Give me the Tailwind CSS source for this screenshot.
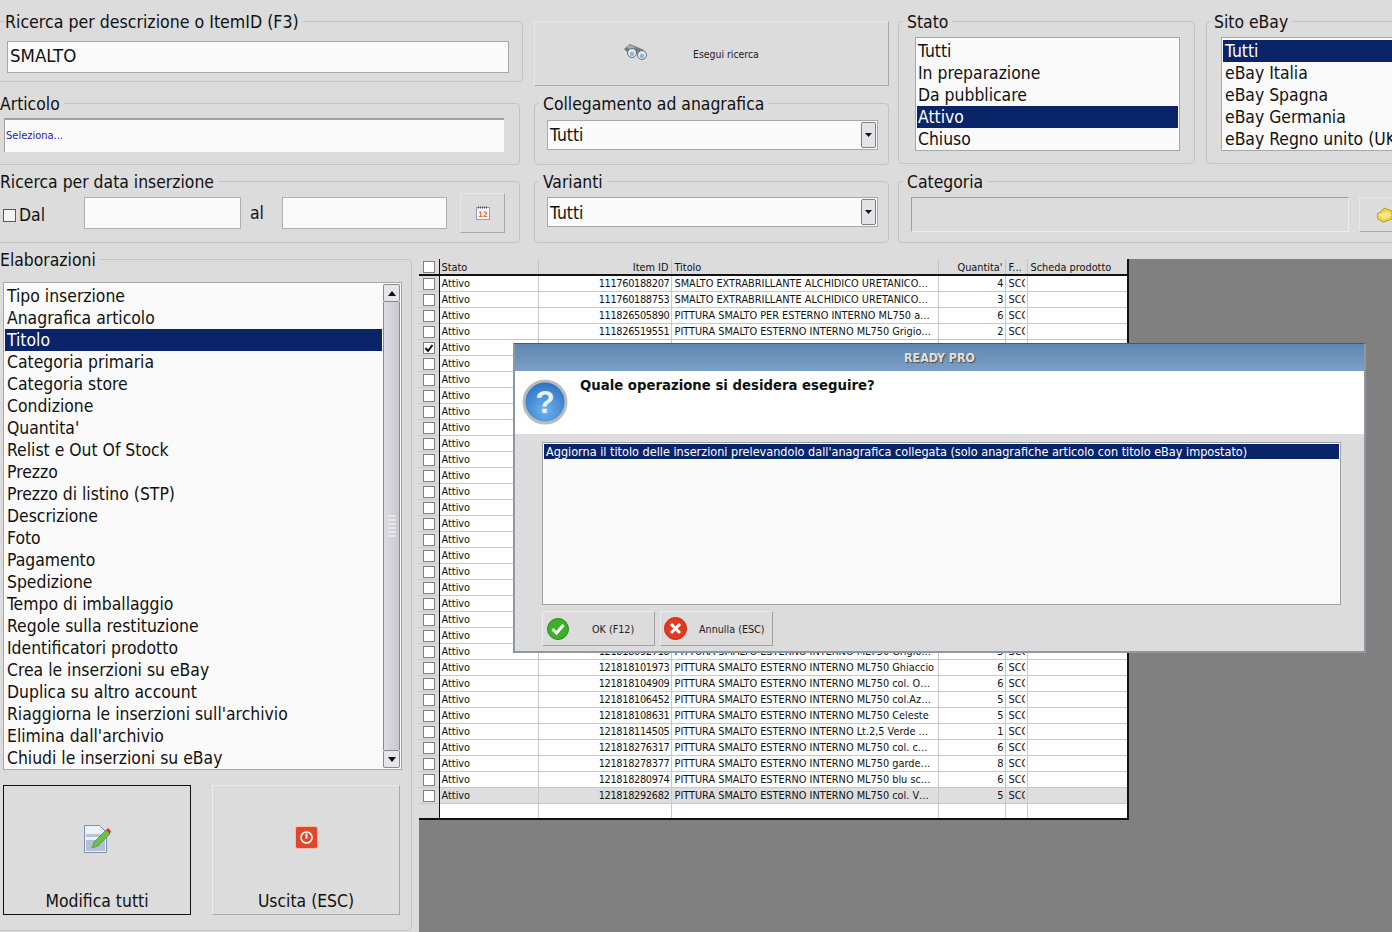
<!DOCTYPE html>
<html>
<head>
    <title>Ready Pro - Inserzioni eBay</title>
    <script src="https://cdn.jsdelivr.net/npm/@tailwindcss/browser@4"></script>
</head>
<body class="bg-[#dcdcdc] text-[#111] [font-family:'DejaVu_Sans_Condensed','DejaVu_Sans',sans-serif]">
<div class="relative w-[1392px] h-[932px] overflow-hidden">

    <!-- filtri -->
    <div class="grid grid-cols-[534px_364px_308px_1fr] grid-rows-[82px_78px_78px] pt-[10px] h-[248px]">

        <fieldset class="min-w-0 -ml-[7px] w-[530px] h-[72px] border border-[#c4c4c4] rounded-[4px]">
            <legend class="ml-[11px] pr-1 text-[17.6px] leading-[22px] translate-y-[1px]">Ricerca per descrizione o ItemID (F3)</legend>
            <input type="text" value="SMALTO" class="block mt-[9px] ml-[13px] w-[502px] h-[32px] pl-[2px] pb-[3px] bg-[#fafafa] border border-[#a8a8a8] text-[18.5px]">
        </fieldset>

        <button class="mt-[11px] w-[355px] h-[65px] flex items-center bg-[#dcdcdc] border border-t-[#e8e8e8] border-l-[#e8e8e8] border-r-[#a8a8a8] border-b-[#a8a8a8] text-[10.4px] text-[#222]">
            <svg class="ml-[88px] mb-[3px] w-[25px] h-[18px]" viewBox="0 0 25 18">
                <path d="M1 6l6-5 7 3 7 3-3 5-8-3-5 1z" fill="#6f7884"/>
                <path d="M3 4l5-2 5 3-5 2z" fill="#a4acb6"/>
                <circle cx="9" cy="10" r="4.5" fill="#dfe8f2" stroke="#66707c"/>
                <circle cx="19" cy="12" r="4.5" fill="#dfe8f2" stroke="#66707c"/>
                <circle cx="9" cy="11" r="2.2" fill="#8fb2d8"/>
                <circle cx="19" cy="13" r="2.2" fill="#8fb2d8"/>
            </svg>
            <span class="ml-[45px] mt-[2px]">Esegui ricerca</span>
        </button>

        <fieldset class="row-span-2 min-w-0 w-[297px] h-[154px] border border-[#c4c4c4] rounded-[4px]">
            <legend class="ml-[4px] px-1 text-[17.4px] leading-[22px] translate-y-[1px]">Stato</legend>
            <ul class="mt-[5px] ml-[16px] w-[265px] h-[114px] py-[2px] px-[1px] bg-[#fafafa] border border-[#a8a8a8] text-[17.4px] leading-[22px]">
                <li class="pl-[1px]">Tutti</li>
                <li class="pl-[1px]">In preparazione</li>
                <li class="pl-[1px]">Da pubblicare</li>
                <li class="pl-[1px] bg-[#0a246a] text-white">Attivo</li>
                <li class="pl-[1px]">Chiuso</li>
            </ul>
        </fieldset>

        <fieldset class="row-span-2 min-w-0 w-[200px] h-[154px] border border-r-0 border-[#c4c4c4] rounded-l-[4px]">
            <legend class="ml-[3px] px-1 text-[17.4px] leading-[22px] translate-y-[1px]">Sito eBay</legend>
            <ul class="mt-[5px] ml-[14px] h-[114px] py-[2px] pl-[1px] bg-[#fafafa] border border-r-0 border-[#a8a8a8] text-[17.4px] leading-[22px] whitespace-nowrap overflow-hidden">
                <li class="px-[2px] bg-[#0a246a] text-white">Tutti</li>
                <li class="px-[2px]">eBay Italia</li>
                <li class="px-[2px]">eBay Spagna</li>
                <li class="px-[2px]">eBay Germania</li>
                <li class="px-[2px]">eBay Regno unito (UK)</li>
            </ul>
        </fieldset>

        <fieldset class="min-w-0 -ml-[7px] w-[527px] h-[73px] border border-[#c4c4c4] rounded-[4px]">
            <legend class="ml-[6px] pr-1 text-[17.4px] leading-[22px] translate-y-[1px]">Articolo</legend>
            <div class="mt-[4px] ml-[10px] w-[500px] h-[34px] pl-[1px] flex items-center bg-[#fafafa] border-t-2 border-l border-[#a0a0a0] text-[11px] text-[#1a1ab0]">Seleziona...</div>
        </fieldset>

        <fieldset class="min-w-0 w-[355px] h-[73px] border border-[#c4c4c4] rounded-[4px]">
            <legend class="ml-[4px] px-1 text-[17.4px] leading-[22px] translate-y-[1px]">Collegamento ad anagrafica</legend>
            <div class="mt-[6px] ml-[12px] w-[331px] h-[30px] flex items-center justify-between bg-[#fafafa] border border-[#a8a8a8] pl-[2px] pr-[1px] text-[17.4px]">
                <span class="mt-[1px]">Tutti</span>
                <span class="w-[15px] h-[26px] flex items-center justify-center bg-[#e4e4e8] border border-[#808080] rounded-[2px]">
                    <svg class="w-[7px] h-[4px]" viewBox="0 0 7 4"><path d="M0 0h7L3.5 4z" fill="#111"/></svg>
                </span>
            </div>
        </fieldset>

        <fieldset class="min-w-0 -ml-[7px] w-[527px] h-[73px] border border-[#c4c4c4] rounded-[4px]">
            <legend class="ml-[6px] pr-1 text-[17.4px] leading-[22px] translate-y-[1px]">Ricerca per data inserzione</legend>
            <div class="flex items-center mt-[1px] ml-[10px] h-[40px]">
                <span class="w-[13px] h-[13px] -ml-[1px] mt-[4px] bg-[#f4f4f4] border border-[#4a5a70]"></span>
                <span class="ml-[3px] mt-[4px] w-[29px] text-[17.4px]">Dal</span>
                <input type="text" class="ml-[36px] w-[157px] h-[32px] bg-[#fafafa] border border-[#b0b0b0]">
                <span class="ml-[9px] w-[23px] text-[17.4px]">al</span>
                <input type="text" class="ml-[9px] w-[165px] h-[32px] bg-[#fafafa] border border-[#b0b0b0]">
                <button class="ml-[13px] w-[45px] h-[40px] flex items-center justify-center bg-[#dcdcdc] border border-t-[#e8e8e8] border-l-[#e8e8e8] border-r-[#a8a8a8] border-b-[#a8a8a8]">
                    <svg class="w-[14px] h-[14px]" viewBox="0 0 14 14">
                        <rect x="0.5" y="1.5" width="13" height="12" fill="#f6f6fc" stroke="#9a9ab4"/>
                        <path d="M2 1.5h10" stroke="#555" stroke-width="2" stroke-dasharray="1 1"/>
                        <text x="7" y="11" text-anchor="middle" font-size="7.5" font-weight="700" fill="#e0702a">12</text>
                    </svg>
                </button>
            </div>
        </fieldset>

        <fieldset class="min-w-0 w-[355px] h-[73px] border border-[#c4c4c4] rounded-[4px]">
            <legend class="ml-[4px] px-1 text-[17.4px] leading-[22px] translate-y-[1px]">Varianti</legend>
            <div class="mt-[5px] ml-[12px] w-[331px] h-[30px] flex items-center justify-between bg-[#fafafa] border border-[#a8a8a8] pl-[2px] pr-[1px] text-[17.4px]">
                <span class="mt-[3px]">Tutti</span>
                <span class="w-[15px] h-[26px] flex items-center justify-center bg-[#e4e4e8] border border-[#808080] rounded-[2px]">
                    <svg class="w-[7px] h-[4px]" viewBox="0 0 7 4"><path d="M0 0h7L3.5 4z" fill="#111"/></svg>
                </span>
            </div>
        </fieldset>

        <fieldset class="col-span-2 min-w-0 h-[73px] border border-r-0 border-[#c4c4c4] rounded-l-[4px]">
            <legend class="ml-[4px] px-1 text-[17.4px] leading-[22px] translate-y-[1px]">Categoria</legend>
            <div class="flex mt-[5px] ml-[12px]">
                <div class="w-[438px] h-[35px] bg-[#dcdcdc] border border-t-[#a0a0a0] border-l-[#a0a0a0] border-r-[#ececec] border-b-[#ececec]"></div>
                <button class="ml-[10px] flex-1 h-[35px] flex items-center pl-[17px] bg-[#dcdcdc] border border-t-[#e8e8e8] border-l-[#e8e8e8] border-b-[#a8a8a8]">
                    <svg class="w-[15px] h-[16px]" viewBox="0 0 15 16"><path d="M0 7l5-3 2-3 8 3v8l-9 3-5-3z" fill="#f4d84c" stroke="#b89a2a"/><path d="M2 8l7-3 6 3-8 4z" fill="#fbeb8c"/></svg>
                </button>
            </div>
        </fieldset>
    </div>

    <!-- parte bassa -->
    <div class="flex h-[684px]">
        <fieldset class="shrink-0 min-w-0 -ml-[7px] w-[419px] h-[683px] border border-[#c4c4c4] rounded-[4px]">
            <legend class="ml-[6px] pr-1 text-[17.4px] leading-[22px] translate-y-[1px]">Elaborazioni</legend>
            <div class="relative mt-[12px] ml-[9px] w-[399px] h-[488px] bg-[#fafafa] border border-[#a8a8a8] pt-[2px] pl-[1px]">
                <ul class="w-[377px] text-[17.4px] leading-[22px]">
                    <li class="px-[2px]">Tipo inserzione</li>
                    <li class="px-[2px]">Anagrafica articolo</li>
                    <li class="px-[2px] bg-[#0a246a] text-white">Titolo</li>
                    <li class="px-[2px]">Categoria primaria</li>
                    <li class="px-[2px]">Categoria store</li>
                    <li class="px-[2px]">Condizione</li>
                    <li class="px-[2px]">Quantita'</li>
                    <li class="px-[2px]">Relist e Out Of Stock</li>
                    <li class="px-[2px]">Prezzo</li>
                    <li class="px-[2px]">Prezzo di listino (STP)</li>
                    <li class="px-[2px]">Descrizione</li>
                    <li class="px-[2px]">Foto</li>
                    <li class="px-[2px]">Pagamento</li>
                    <li class="px-[2px]">Spedizione</li>
                    <li class="px-[2px]">Tempo di imballaggio</li>
                    <li class="px-[2px]">Regole sulla restituzione</li>
                    <li class="px-[2px]">Identificatori prodotto</li>
                    <li class="px-[2px]">Crea le inserzioni su eBay</li>
                    <li class="px-[2px]">Duplica su altro account</li>
                    <li class="px-[2px]">Riaggiorna le inserzioni sull'archivio</li>
                    <li class="px-[2px]">Elimina dall'archivio</li>
                    <li class="px-[2px]">Chiudi le inserzioni su eBay</li>
                </ul>
                <!-- scrollbar -->
                <div class="absolute right-[1px] top-[1px] bottom-[1px] w-[17px] flex flex-col bg-[#eeeeee]">
                    <span class="h-[18px] flex items-center justify-center bg-[#e6e6ea] border border-[#8a8a8a] rounded-[2px]">
                        <svg class="w-[8px] h-[5px]" viewBox="0 0 8 5"><path d="M0 5h8L4 0z" fill="#111"/></svg>
                    </span>
                    <span class="flex-1 flex items-center justify-center bg-gradient-to-r from-[#dcdce2] to-[#c8c8d0] border-x border-[#8a8a8a]">
                        <span class="w-[8px] h-[22px] bg-[repeating-linear-gradient(180deg,#e8e8ec_0,#e8e8ec_2px,transparent_2px,transparent_4px)]"></span>
                    </span>
                    <span class="h-[18px] flex items-center justify-center bg-[#e6e6ea] border border-[#8a8a8a] rounded-[2px]">
                        <svg class="w-[8px] h-[5px]" viewBox="0 0 8 5"><path d="M0 0h8L4 5z" fill="#111"/></svg>
                    </span>
                </div>
            </div>
            <div class="flex mt-[15px] ml-[9px] gap-[21px]">
                <button class="w-[188px] h-[130px] flex flex-col items-center bg-[#dcdcdc] border border-[#111] text-[17.4px]">
                    <svg class="mt-[38px] w-[28px] h-[30px]" viewBox="0 0 28 30">
                        <path d="M1.5 1.5h15l7 7v20h-22z" fill="#eef3fb" stroke="#7a90b8"/>
                        <rect x="3" y="10" width="19" height="3" fill="#b8c4d8"/>
                        <rect x="3" y="16" width="19" height="11" fill="#b4c0d4"/>
                        <path d="M9 24l2-6L23 6l4 4-12 12z" fill="#6cc04a" stroke="#3e8a2a" stroke-width=".6"/>
                        <path d="M23 6l2-2 3 3-1 3z" fill="#d83a2a"/>
                    </svg>
                    <span class="mt-auto">Modifica tutti</span>
                </button>
                <button class="w-[188px] h-[130px] flex flex-col items-center bg-[#dcdcdc] border border-t-[#ececec] border-l-[#ececec] border-r-[#a8a8a8] border-b-[#a8a8a8] text-[17.4px]">
                    <svg class="mt-[40px] w-[23px] h-[23px]" viewBox="0 0 23 23">
                        <rect x="0.5" y="0.5" width="22" height="22" rx="2" fill="#e2472a" stroke="#f0c0a8"/>
                        <circle cx="11.5" cy="11.5" r="5.5" fill="none" stroke="#fff" stroke-width="1.6"/>
                        <path d="M11.5 7.5v5" stroke="#fff" stroke-width="1.8"/>
                    </svg>
                    <span class="mt-auto">Uscita (ESC)</span>
                </button>
            </div>
        </fieldset>

        <div class="ml-[7px] flex-1 mt-[11px] h-[673px] bg-[#808080]">
            <div class="w-[710px] h-[561px] bg-white border-r-2 border-b-2 border-[#111] overflow-hidden">
                <table class="w-[708px] table-fixed border-collapse text-[10.85px] leading-[15px]">
                    <colgroup>
                        <col class="w-[20px]"><col class="w-[99px]"><col class="w-[133px]"><col class="w-[267px]"><col class="w-[67px]"><col class="w-[22px]"><col>
                    </colgroup>
                    <thead class="bg-[#dcdcdc] leading-[13px]">
                        <tr class="h-[15px] border-b-2 border-[#111]">
                            <th class="font-normal border-r border-[#111] pl-[4px]"><span class="block w-[12px] h-[12px] bg-white border border-[#808080]"></span></th>
                            <th class="font-normal text-left pl-[2px] pt-[2px] border-r border-[#c4c4c4]">Stato</th>
                            <th class="font-normal text-right pr-[2px] pt-[2px] border-r border-[#c4c4c4]">Item ID</th>
                            <th class="font-normal text-left pl-[3px] pt-[2px] border-r border-[#c4c4c4]">Titolo</th>
                            <th class="font-normal text-right pr-[2px] pt-[2px] border-r border-[#c4c4c4]">Quantita'</th>
                            <th class="font-normal text-left pl-[3px] pt-[2px] border-r border-[#c4c4c4]">F...</th>
                            <th class="font-normal text-left pl-[3px] pt-[2px]">Scheda prodotto</th>
                        </tr>
                    </thead>
                    <tbody id="righe"></tbody>
                </table>
            </div>
        </div>
    </div>

    <!-- finestra di dialogo -->
    <div class="absolute left-[513px] top-[343px] w-[853px] h-[310px] flex flex-col bg-[#dcdcdc] border-2 border-t border-[#8e98a4] border-t-[#3a5a80]">
        <div class="h-[27px] pt-[1px] flex items-center justify-center bg-gradient-to-b from-[#5d87b2] to-[#7d9fc4] text-[12.3px] font-bold text-[#e0e0e0] [text-shadow:1px_1px_1px_#4a4a4a]">READY PRO</div>
        <div class="h-[63px] flex bg-white">
            <svg class="ml-[7px] mt-[8px] w-[46px] h-[46px]" viewBox="0 0 46 46">
                <defs>
                    <radialGradient id="sfera" cx=".5" cy=".7" r=".7"><stop offset="0" stop-color="#6cb4f0"/><stop offset="1" stop-color="#2a6fc0"/></radialGradient>
                </defs>
                <circle cx="23" cy="23" r="21" fill="url(#sfera)" stroke="#b8bcc0" stroke-width="3"/>
                <text x="23" y="34" text-anchor="middle" font-size="32" font-weight="700" fill="#e8f0f8" font-family="Liberation Sans, sans-serif">?</text>
            </svg>
            <span class="ml-[12px] mt-[3px] text-[14.75px] font-bold">Quale operazione si desidera eseguire?</span>
        </div>
        <div class="mt-[8px] ml-[27px] w-[799px] h-[163px] py-[1px] px-[1px] bg-[#fafafa] border border-[#a0a0a0] text-[12.55px] leading-[15px]">
            <div class="px-[2px] bg-[#0a246a] text-white">Aggiorna il titolo delle inserzioni prelevandolo dall'anagrafica collegata (solo anagrafiche articolo con titolo eBay impostato)</div>
        </div>
        <div class="flex mt-[6px] ml-[27px] gap-[5px] text-[10.7px] text-[#222]">
            <button class="w-[113px] h-[35px] flex items-center bg-[#dcdcdc] border border-t-[#ececec] border-l-[#ececec] border-r-[#a0a0a0] border-b-[#a0a0a0]">
                <svg class="ml-[4px] w-[22px] h-[22px]" viewBox="0 0 22 22">
                    <circle cx="11" cy="11" r="10.5" fill="#3fae2a" stroke="#2a8a1a"/>
                    <path d="M5.5 11l4 4 7-8" fill="none" stroke="#fff" stroke-width="3"/>
                </svg>
                <span class="ml-[23px] mt-[3px]">OK (F12)</span>
            </button>
            <button class="w-[113px] h-[35px] flex items-center bg-[#dcdcdc] border border-t-[#ececec] border-l-[#ececec] border-r-[#a0a0a0] border-b-[#a0a0a0]">
                <svg class="ml-[3px] w-[23px] h-[23px]" viewBox="0 0 23 23">
                    <circle cx="11.5" cy="11.5" r="11" fill="#e23a20" stroke="#c42a10"/>
                    <path d="M7 7l9 9M16 7l-9 9" stroke="#fff" stroke-width="3"/>
                </svg>
                <span class="ml-[12px] mt-[3px]">Annulla (ESC)</span>
            </button>
        </div>
    </div>
</div>

<script>
    const inserzioni = [
        ['111760188207', 'SMALTO EXTRABRILLANTE ALCHIDICO URETANICO…', 4],
        ['111760188753', 'SMALTO EXTRABRILLANTE ALCHIDICO URETANICO…', 3],
        ['111826505890', 'PITTURA SMALTO PER ESTERNO INTERNO ML750 a…', 6],
        ['111826519551', 'PITTURA SMALTO ESTERNO INTERNO ML750 Grigio…', 2],
        ...Array(19).fill(['', '', '']),
        ['121818092718', 'PITTURA SMALTO ESTERNO INTERNO ML750 Grigio…', 5],
        ['121818101973', 'PITTURA SMALTO ESTERNO INTERNO ML750 Ghiaccio', 6],
        ['121818104909', 'PITTURA SMALTO ESTERNO INTERNO ML750 col. O…', 6],
        ['121818106452', 'PITTURA SMALTO ESTERNO INTERNO ML750 col.Az…', 5],
        ['121818108631', 'PITTURA SMALTO ESTERNO INTERNO ML750 Celeste', 5],
        ['121818114505', 'PITTURA SMALTO ESTERNO INTERNO Lt.2,5 Verde …', 1],
        ['121818276317', 'PITTURA SMALTO ESTERNO INTERNO ML750 col. c…', 6],
        ['121818278377', 'PITTURA SMALTO ESTERNO INTERNO ML750 garde…', 8],
        ['121818280974', 'PITTURA SMALTO ESTERNO INTERNO ML750 blu sc…', 6],
        ['121818292682', 'PITTURA SMALTO ESTERNO INTERNO ML750 col. V…', 5],
    ];

    const segnoSpunta = '<svg class="w-[10px] h-[10px]" viewBox="0 0 10 10"><path d="M1.5 5l2.5 3 4.5-6" fill="none" stroke="#111" stroke-width="2"/></svg>';

    // le righe coperte dalla finestra di dialogo restano vuote, tranne lo stato
    document.getElementById('righe').innerHTML = inserzioni.map((r, i) => `
        <tr class="h-[16px] border-b border-[#c8c8c8] ${i === inserzioni.length - 1 ? 'bg-[#dedede]' : ''}">
            <td class="bg-[#dcdcdc] border-r border-[#111] pl-[4px]"><span class="block w-[12px] h-[12px] bg-white border border-[#808080]">${i === 4 ? segnoSpunta : ''}</span></td>
            <td class="pl-[2px] border-r border-[#c8c8c8]">Attivo</td>
            <td class="text-right pr-[1px] border-r border-[#c8c8c8] tracking-[-0.3px]">${r[0]}</td>
            <td class="pl-[3px] border-r border-[#c8c8c8] whitespace-nowrap overflow-hidden">${r[1]}</td>
            <td class="text-right pr-[1px] border-r border-[#c8c8c8]">${r[2]}</td>
            <td class="pl-[3px] border-r border-[#c8c8c8]"><span class="block w-[16px] h-[15px] overflow-hidden whitespace-nowrap">${r[0] ? 'SCO' : ''}</span></td>
            <td></td>
        </tr>`).join('') + `
        <tr class="h-[16px]">
            <td class="bg-[#dcdcdc] border-r border-[#111]"></td>
            <td class="border-r border-[#c8c8c8]"></td>
            <td class="border-r border-[#c8c8c8]"></td>
            <td class="border-r border-[#c8c8c8]"></td>
            <td class="border-r border-[#c8c8c8]"></td>
            <td class="border-r border-[#c8c8c8]"></td>
            <td></td>
        </tr>`;
</script>
</body>
</html>
